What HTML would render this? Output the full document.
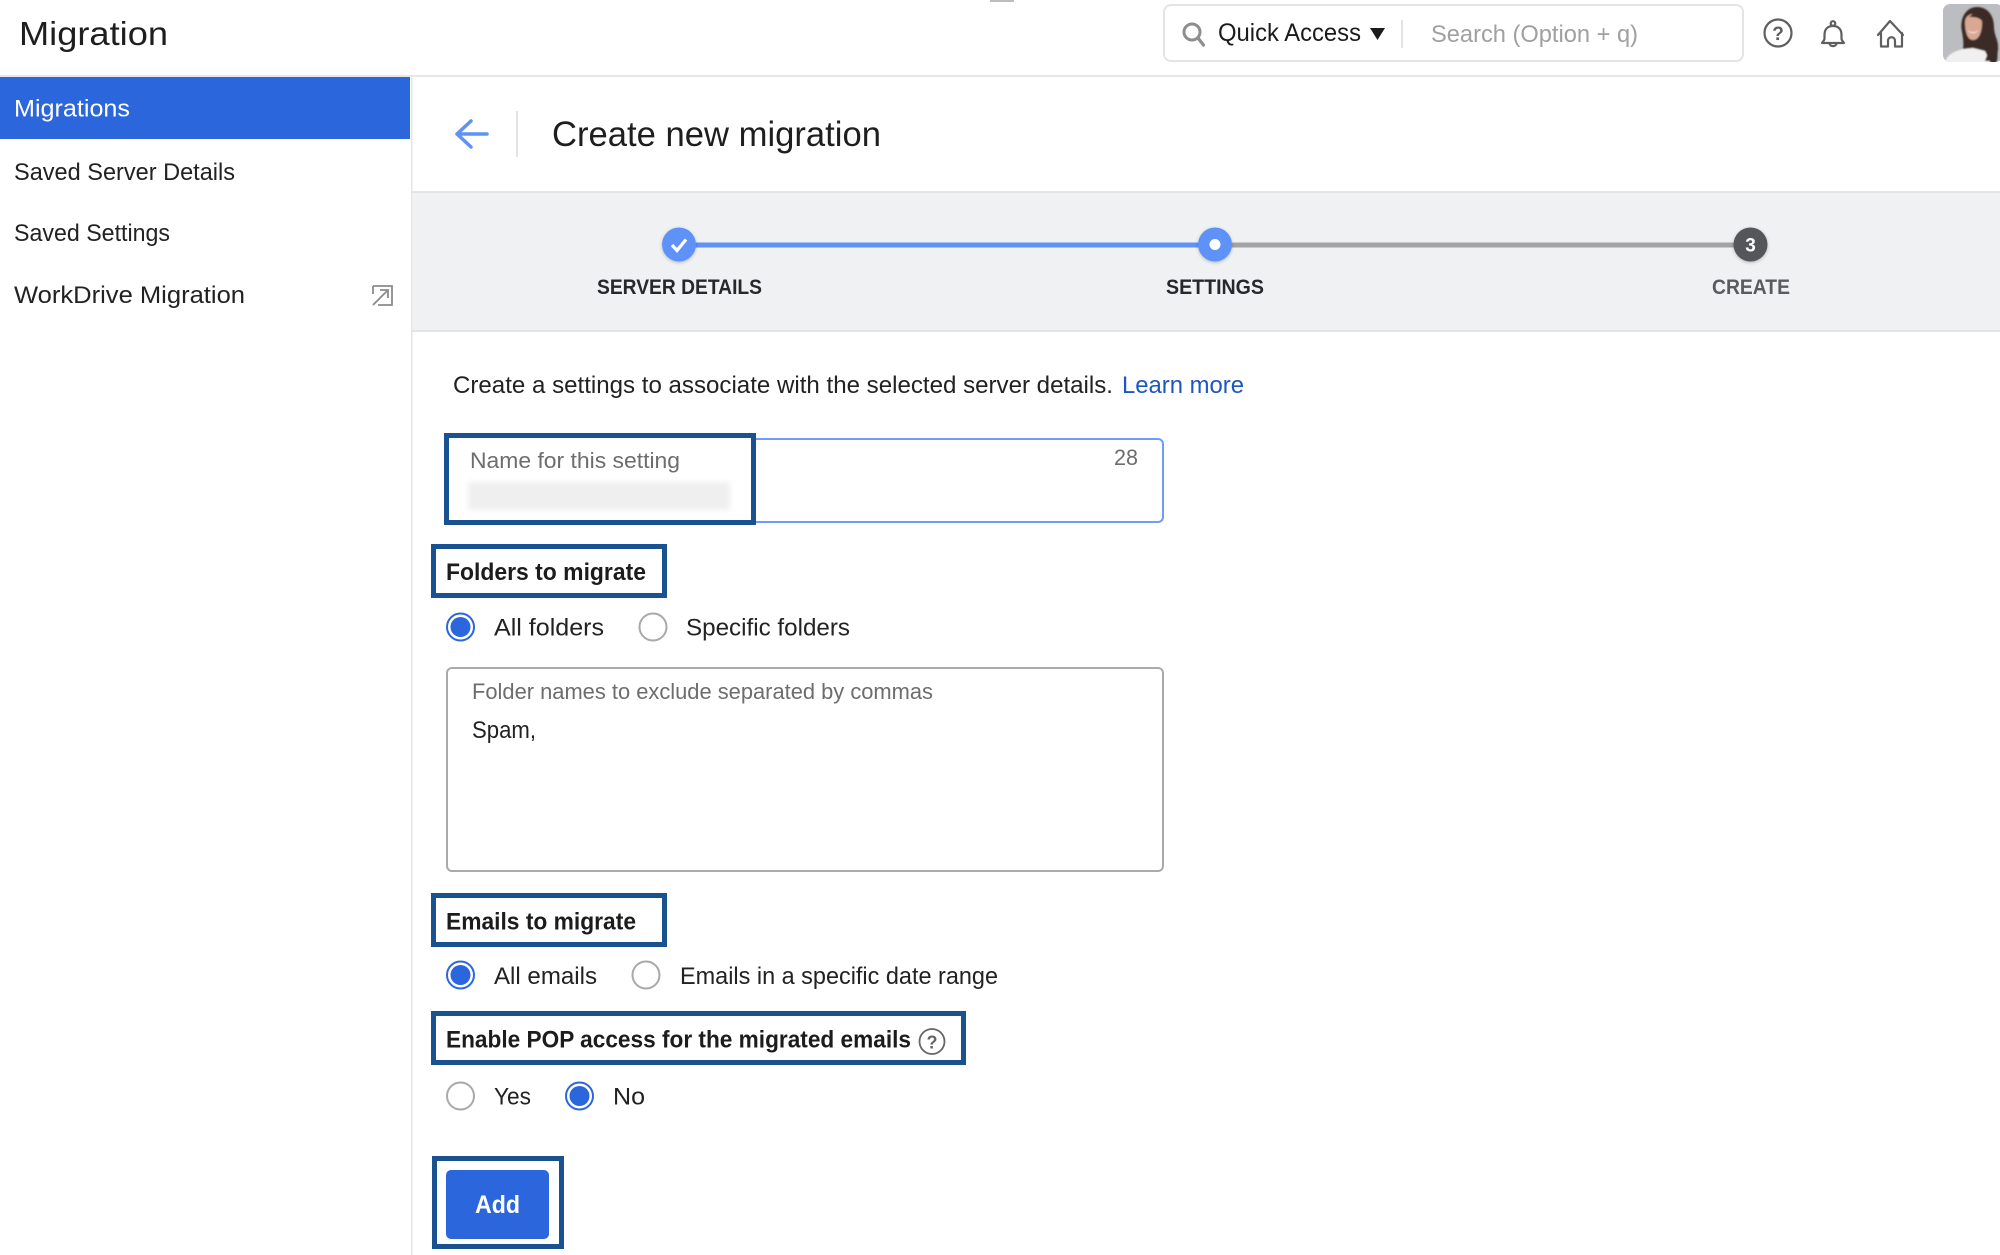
<!DOCTYPE html>
<html lang="en">
<head>
<meta charset="utf-8">
<title>Migration</title>
<style>
html,body{margin:0;padding:0;background:#fff;width:2000px;height:1255px;overflow:hidden}
svg{display:block}
text{font-family:"Liberation Sans",sans-serif;fill:#222;font-size:24px}
.b{font-weight:700;fill:#1c1c1c}
.g{fill:#6d6d6d}
.lbl{font-size:21px;font-weight:700;fill:#26282b}
.box{fill:none;stroke:#1a5291;stroke-width:5}
.rad{fill:#fff;stroke:#a9a9a9;stroke-width:2}
.ron{fill:#fff;stroke:#2c66dd;stroke-width:2}
.dot{fill:#2c66dd}
.ic{fill:none;stroke:#5f5f5f;stroke-width:2.200;stroke-linecap:round;stroke-linejoin:round}
</style>
</head>
<body>
<svg width="2000" height="1255" viewBox="0 0 2000 1255" xmlns="http://www.w3.org/2000/svg">
<defs>
<filter id="bl" x="-10%" y="-10%" width="120%" height="120%"><feGaussianBlur stdDeviation="0.9"/></filter>
<filter id="bl2" x="-10%" y="-30%" width="120%" height="160%"><feGaussianBlur stdDeviation="3"/></filter>
<filter id="sh" x="-30%" y="-30%" width="160%" height="160%"><feDropShadow dx="0" dy="1" stdDeviation="1.5" flood-color="#000" flood-opacity=".25"/></filter>
<clipPath id="av"><rect x="1943" y="4" width="60" height="58" rx="7"/></clipPath>
</defs>

<!-- top bar -->
<rect x="0" y="75" width="2000" height="2" fill="#e6e7e8"/>
<rect x="990" y="0" width="24" height="2" fill="#bdbdbd"/>
<text x="19" y="45" style="font-size:33px;fill:#1e1e1e" textLength="149" lengthAdjust="spacingAndGlyphs">Migration</text>

<rect x="1164" y="5" width="579" height="56" rx="7" fill="#fff" stroke="#e3e4e6" stroke-width="2"/>
<circle cx="1192" cy="32" r="8" fill="none" stroke="#8e8e8e" stroke-width="3"/>
<path d="M1198 38l5.500 7" stroke="#8e8e8e" stroke-width="3.200" stroke-linecap="round"/>
<text x="1218" y="41" style="font-size:25px;fill:#1b1b1b" textLength="143" lengthAdjust="spacingAndGlyphs">Quick Access</text>
<path d="M1370 28h15l-7.500 12z" fill="#1c1c1c"/>
<rect x="1401" y="20" width="2" height="28" fill="#e3e4e6"/>
<text x="1431" y="42" style="font-size:24px;fill:#a0a0a0" textLength="207" lengthAdjust="spacingAndGlyphs">Search (Option + q)</text>

<circle cx="1778" cy="33" r="13.500" class="ic"/>
<text x="1778" y="40" text-anchor="middle" style="font-size:19px;font-weight:700;fill:#5f5f5f">?</text>
<path class="ic" d="M1833 26c-6 0-8.500 4-8.500 9v3.500c0 2-1.500 3-2.500 4.500h22c-1-1.500-2.500-2.500-2.500-4.500V35c0-5-2.500-9-8.500-9z"/>
<circle cx="1833" cy="23.500" r="2.300" class="ic"/>
<path class="ic" d="M1829.500 43.500c.5 3.500 6.500 3.500 7 0"/>
<path class="ic" d="M1878 35l12-14 13 14M1881 33v13.500h7V41c0-5 7-5 7 0v5.500h7V33"/>

<!-- avatar -->
<g clip-path="url(#av)">
<rect x="1943" y="4" width="60" height="58" fill="#bbbdc0"/>
<g filter="url(#bl)">
<path d="M1962 32c-3-15 5-25 15-25 11 0 17 9 17 20 0 9 5 13 4 23l-2 13h-36l3-14c1-6 0-11-1-17z" fill="#3b2b27"/>
<path d="M1945 64c0-9 10-13 18-15l10-1 12 3 6 13z" fill="#eff0ef"/>
<path d="M1965 22c0-5 4-8 8-8s9 2 9 9c0 9-3 17-9 17s-8-9-8-18z" fill="#d8a893"/>
<path d="M1968 30c2 3 8 3 10 0-1 4-9 4-10 0z" fill="#fff"/>
<path d="M1969 17c5 0 10 0 13 4l1-6-8-3z" fill="#3b2b27"/>
<path d="M1985 22c2 8 0 18 3 26 1 5-2 9-3 13h12c2-9-2-18-4-26-1-6-3-11-8-13z" fill="#3b2b27"/>
</g>
</g>

<!-- sidebar -->
<rect x="411" y="77" width="1.500" height="1178" fill="#e4e5e6"/>
<rect x="0" y="77" width="410" height="62" fill="#2c66dd"/>
<text x="14" y="116.500" style="font-size:24px;fill:#fff" textLength="116" lengthAdjust="spacingAndGlyphs">Migrations</text>
<text x="14" y="180" textLength="221" lengthAdjust="spacingAndGlyphs">Saved Server Details</text>
<text x="14" y="241" textLength="156" lengthAdjust="spacingAndGlyphs">Saved Settings</text>
<text x="14" y="303" textLength="231" lengthAdjust="spacingAndGlyphs">WorkDrive Migration</text>
<path d="M373 286h19v19h-14M373 286v8M373 305l14-14M380 290h8v8" fill="none" stroke="#8b8b8b" stroke-width="1.800"/>

<!-- page header -->
<path d="M487 134h-30M471 121l-14 13 14 13" fill="none" stroke="#5e92f5" stroke-width="3.500" stroke-linecap="round" stroke-linejoin="round"/>
<rect x="516" y="111" width="2" height="46" fill="#e2e3e4"/>
<text x="552" y="146" style="font-size:35px;fill:#1e1e1e" textLength="329" lengthAdjust="spacingAndGlyphs">Create new migration</text>

<!-- stepper -->
<rect x="412" y="192" width="1588" height="140" fill="#f0f1f3"/>
<rect x="412" y="191" width="1588" height="2" fill="#e3e4e6"/>
<rect x="412" y="330" width="1588" height="2" fill="#e3e4e6"/>
<rect x="1215" y="242.500" width="535" height="5" fill="#a3a3a5"/>
<rect x="679" y="242.500" width="536" height="5" fill="#5e92f8"/>
<circle cx="679" cy="244.500" r="17" fill="#5e92f8" filter="url(#sh)"/>
<path d="M672 245l5 5.500 9-11" fill="none" stroke="#fff" stroke-width="3.200"/>
<circle cx="1215" cy="244.500" r="17" fill="#5e92f8" filter="url(#sh)"/>
<circle cx="1215" cy="244.500" r="5.500" fill="#fff"/>
<circle cx="1750.500" cy="244.500" r="17" fill="#55565a" filter="url(#sh)"/>
<text x="1750.500" y="251.500" text-anchor="middle" style="font-size:19px;font-weight:700;fill:#fff">3</text>
<text x="597" y="294" class="lbl" textLength="165" lengthAdjust="spacingAndGlyphs">SERVER DETAILS</text>
<text x="1166" y="294" class="lbl" textLength="98" lengthAdjust="spacingAndGlyphs">SETTINGS</text>
<text x="1712" y="294" class="lbl" style="fill:#5a5b5e" textLength="78" lengthAdjust="spacingAndGlyphs">CREATE</text>

<!-- intro -->
<text x="453" y="393" textLength="660" lengthAdjust="spacingAndGlyphs">Create a settings to associate with the selected server details.</text>
<text x="1122" y="393" style="fill:#1c56c2" textLength="122" lengthAdjust="spacingAndGlyphs">Learn more</text>

<!-- name input -->
<rect x="447" y="439" width="716" height="83" rx="5" fill="#fff" stroke="#6e9cf6" stroke-width="2"/>
<rect x="446.500" y="435.500" width="307" height="87" class="box" style="fill:#fff"/>
<text x="470" y="468" class="g" style="font-size:22px" textLength="210" lengthAdjust="spacingAndGlyphs">Name for this setting</text>
<rect x="468" y="482" width="262" height="28" fill="#efefef" filter="url(#bl2)"/>
<text x="1114" y="465" class="g" style="font-size:22px" textLength="24" lengthAdjust="spacingAndGlyphs">28</text>

<!-- folders -->
<rect x="433.500" y="546.500" width="231" height="49" class="box"/>
<text x="446" y="580" class="b" textLength="200" lengthAdjust="spacingAndGlyphs">Folders to migrate</text>
<circle cx="460.500" cy="627" r="13.500" class="ron"/><circle cx="460.500" cy="627" r="10" class="dot"/>
<text x="494" y="635.500" textLength="110" lengthAdjust="spacingAndGlyphs">All folders</text>
<circle cx="653" cy="627" r="13.500" class="rad"/>
<text x="686" y="635.500" textLength="164" lengthAdjust="spacingAndGlyphs">Specific folders</text>

<rect x="447" y="668" width="716" height="203" rx="5" fill="#fff" stroke="#a9aaab" stroke-width="2"/>
<text x="472" y="699" class="g" style="font-size:22px" textLength="461" lengthAdjust="spacingAndGlyphs">Folder names to exclude separated by commas</text>
<text x="472" y="738" textLength="64" lengthAdjust="spacingAndGlyphs">Spam,</text>

<!-- emails -->
<rect x="433.500" y="895.500" width="231" height="49" class="box"/>
<text x="446" y="929.500" class="b" textLength="190" lengthAdjust="spacingAndGlyphs">Emails to migrate</text>
<circle cx="460.500" cy="975" r="13.500" class="ron"/><circle cx="460.500" cy="975" r="10" class="dot"/>
<text x="494" y="984" textLength="103" lengthAdjust="spacingAndGlyphs">All emails</text>
<circle cx="646" cy="975" r="13.500" class="rad"/>
<text x="680" y="984" textLength="318" lengthAdjust="spacingAndGlyphs">Emails in a specific date range</text>

<!-- pop -->
<rect x="433.500" y="1013.500" width="530" height="49" class="box"/>
<text x="446" y="1047.500" class="b" textLength="465" lengthAdjust="spacingAndGlyphs">Enable POP access for the migrated emails</text>
<circle cx="932" cy="1041.500" r="12.500" fill="none" stroke="#666" stroke-width="1.800"/>
<text x="932" y="1048.500" text-anchor="middle" style="font-size:18px;font-weight:700;fill:#666">?</text>
<circle cx="460.500" cy="1096" r="13.500" class="rad"/>
<text x="494" y="1104.500" textLength="37" lengthAdjust="spacingAndGlyphs">Yes</text>
<circle cx="579.500" cy="1096" r="13.500" class="ron"/><circle cx="579.500" cy="1096" r="10" class="dot"/>
<text x="613" y="1104.500" textLength="32" lengthAdjust="spacingAndGlyphs">No</text>

<!-- add -->
<rect x="434.500" y="1158.500" width="127" height="88" class="box"/>
<rect x="446" y="1170" width="103" height="69" rx="5" fill="#2c66dd"/>
<text x="475" y="1213" style="font-size:25px;font-weight:700;fill:#fff" textLength="45" lengthAdjust="spacingAndGlyphs">Add</text>
</svg>
</body>
</html>
